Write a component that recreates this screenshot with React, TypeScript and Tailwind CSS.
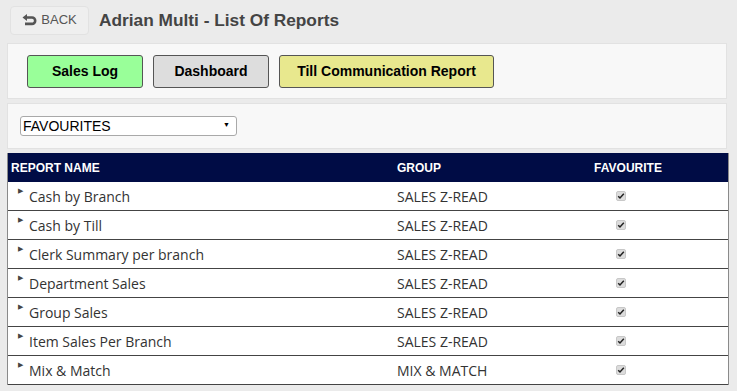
import React from 'react';

const reports = [
  { name: 'Cash by Branch', group: 'SALES Z-READ' },
  { name: 'Cash by Till', group: 'SALES Z-READ' },
  { name: 'Clerk Summary per branch', group: 'SALES Z-READ' },
  { name: 'Department Sales', group: 'SALES Z-READ' },
  { name: 'Group Sales', group: 'SALES Z-READ' },
  { name: 'Item Sales Per Branch', group: 'SALES Z-READ' },
  { name: 'Mix & Match', group: 'MIX & MATCH' },
];

const BackIcon = () => (
  <svg width="15" height="12" viewBox="0 0 15 12" className="mr-1">
    <path d="M0.5 3.5 L5 0 L5 7 Z" fill="#555" />
    <path d="M4 3.5 H10 a3.2 3.2 0 0 1 0 6.4 H3" fill="none" stroke="#555" strokeWidth="2.6" />
  </svg>
);

const Check = () => (
  <span className="inline-flex h-[10px] w-[10px] items-center justify-center rounded-[2px] bg-[#dcdcdc] border border-[#c8c8c8]">
    <svg width="8" height="8" viewBox="0 0 8 8">
      <path d="M1.2 4.2 L3 6 L6.8 1.8" fill="none" stroke="#222" strokeWidth="1.5" />
    </svg>
  </span>
);

const App = () => {
  return (
    <div className="min-h-screen w-[737px] h-[391px] overflow-hidden bg-[#ebebeb] font-['Liberation_Sans',Arial,sans-serif]">
      {/* Header */}
      <div className="flex items-center h-[41px] pl-[10px]">
        <div className="flex items-center h-[29px] w-[79px] mt-[-1px] justify-center rounded-[4px] border border-[#e2e2e2] bg-[#efefef] text-[13px] text-[#555]">
          <BackIcon />
          BACK
        </div>
        <h1 className="ml-[10px] text-[17.3px] font-bold text-[#444]">Adrian Multi - List Of Reports</h1>
      </div>

      {/* Quick links */}
      <div className="mx-[7px] mt-[2px] w-[720px] h-[56px] border border-[#e2e2e2] bg-[#f8f8f8] flex items-center gap-[10px] pl-[19px]">
        <button className="h-[33px] w-[116px] rounded-[3px] border border-[#555] bg-[#99ff99] text-[14px] font-bold text-black">Sales Log</button>
        <button className="h-[33px] w-[116px] rounded-[3px] border border-[#555] bg-[#dddddd] text-[14px] font-bold text-black">Dashboard</button>
        <button className="h-[33px] w-[215px] rounded-[3px] border border-[#555] bg-[#e8e88e] text-[14px] font-bold text-black">Till Communication Report</button>
      </div>

      {/* Filter */}
      <div className="mx-[7px] mt-[4px] w-[720px] h-[46px] border border-[#e2e2e2] bg-[#f8f8f8] flex items-center pl-[12px]">
        <div className="relative flex items-center h-[20px] w-[217px] rounded-[3px] border border-[#a9a9a9] bg-white pl-[2px] text-[14px] text-black">
          FAVOURITES
          <span className="absolute right-[6px] top-[3px] text-[7px]">▼</span>
        </div>
      </div>

      {/* Table */}
      <div className="mx-[7px] mt-[4px] w-[722px] border-l border-r border-[#8a8a8a]">
        <div className="flex items-center h-[29px] bg-[#000c45] text-[12px] font-bold text-white">
          <div className="w-[389px] pl-[3px]">REPORT NAME</div>
          <div className="w-[181px]">GROUP</div>
          <div className="w-[100px] text-center">FAVOURITE</div>
        </div>
        {reports.map((r, i) => (
          <div key={i} className="flex h-[29px] bg-white border-b border-[#444] font-['Open_Sans',sans-serif] text-[14px] text-[#333]">
            <div className="w-[389px] flex pl-[10px]">
              <span className="text-[7px] leading-none mt-[5px] text-[#444]">▶</span>
              <span className="ml-[6px] leading-[29px]">{r.name}</span>
            </div>
            <div className="w-[181px] leading-[29px]">{r.group}</div>
            <div className="w-[100px] flex items-center justify-center pr-[15px]">
              <Check />
            </div>
          </div>
        ))}
      </div>
    </div>
  );
};

export default App;
